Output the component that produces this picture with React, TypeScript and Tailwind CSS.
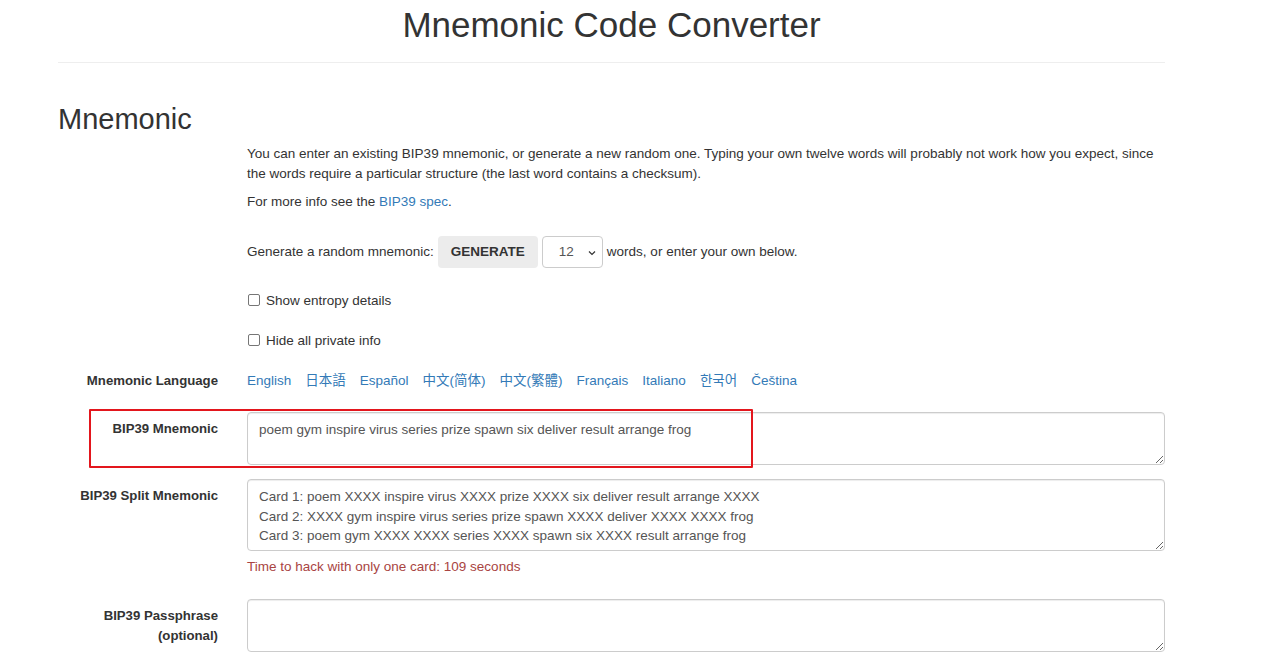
import React from "react";

const font = "font-['Liberation_Sans','Noto_Sans_CJK_SC',Arial,sans-serif]";

function Checkbox({ label }: { label: string }) {
  return (
    <div className="flex items-center h-[19.5px]">
      <span className="ml-[1px] w-[12px] h-[12px] border border-[#767676] rounded-[2px] bg-white mr-[6px] box-border" />
      <span>{label}</span>
    </div>
  );
}

export default function App() {
  const langs = ["English", "日本語", "Español", "中文(简体)", "中文(繁體)", "Français", "Italiano", "한국어", "Čeština"];
  const taCls =
    "block w-[918px] border border-[#ccc] rounded-[4px] px-[11px] py-[7px] text-[13.5px] leading-[19.5px] text-[#555] shadow-[inset_0_1px_1px_rgba(0,0,0,0.075)] outline-none " +
    font;
  return (
    <div className={"relative w-[1280px] h-[656px] overflow-hidden bg-white text-[#333] text-[13.5px] leading-[19.5px] " + font}>
      <div className="ml-[58px] w-[1107px]">
        <h1 className="pt-[6px] text-center text-[35px] leading-[38px] font-normal">Mnemonic Code Converter</h1>
        <div className="mt-[18px] border-t border-[#eee]" />
        <h2 className="mt-[40px] text-[29px] leading-[32px] font-normal">Mnemonic</h2>

        <div className="ml-[189px]">
          <p className="mt-[9px]">
            You can enter an existing BIP39 mnemonic, or generate a new random one. Typing your own twelve words will probably not work how you expect, since
            <br />
            the words require a particular structure (the last word contains a checksum).
          </p>
          <p className="mt-[9px]">
            For more info see the <span className="text-[#337ab7]">BIP39 spec</span>.
          </p>
          <div className="mt-[24px] flex items-center h-[32px]">
            <span>Generate a random mnemonic:</span>
            <span className="ml-[4px] h-[32px] w-[100px] flex items-center justify-center bg-[#ececec] rounded-[4px] font-bold text-[13.5px] text-[#333]">
              GENERATE
            </span>
            <span className="ml-[4px] h-[32px] w-[61px] border border-[#ccc] rounded-[4px] flex items-center pl-[16px] text-[#555] relative">
              12
              <svg className="absolute left-[45px] top-[13px]" width="8" height="6" viewBox="0 0 8 6">
                <path d="M1 1.5 L4 4.5 L7 1.5" fill="none" stroke="#333" strokeWidth="1.2" />
              </svg>
            </span>
            <span className="ml-[4px]">words, or enter your own below.</span>
          </div>
          <div className="mt-[23px]">
            <Checkbox label="Show entropy details" />
          </div>
          <div className="mt-[20.5px]">
            <Checkbox label="Hide all private info" />
          </div>
        </div>

        <div className="mt-[20.5px] grid grid-cols-[160px_918px] gap-x-[29px]">
          <div className="text-right font-bold text-[13.2px]">Mnemonic Language</div>
          <div className="flex gap-[14px] text-[#337ab7]">
            {langs.map((l) => (
              <span key={l}>{l}</span>
            ))}
          </div>
        </div>

        <div className="mt-[22px] grid grid-cols-[160px_918px] gap-x-[29px]">
          <div className="text-right font-bold text-[13.2px] pt-[7px]">BIP39 Mnemonic</div>
          <textarea
            readOnly
            className={taCls + " h-[53px]"}
            value="poem gym inspire virus series prize spawn six deliver result arrange frog"
          />
        </div>

        <div className="mt-[14px] grid grid-cols-[160px_918px] gap-x-[29px]">
          <div className="text-right font-bold text-[13.2px] pt-[7px]">BIP39 Split Mnemonic</div>
          <div>
            <textarea
              readOnly
              className={taCls + " h-[72px] overflow-hidden"}
              value={
                "Card 1: poem XXXX inspire virus XXXX prize XXXX six deliver result arrange XXXX\nCard 2: XXXX gym inspire virus series prize spawn XXXX deliver XXXX XXXX frog\nCard 3: poem gym XXXX XXXX series XXXX spawn six XXXX result arrange frog"
              }
            />
            <div className="mt-[6px] text-[#a94442]">Time to hack with only one card: 109 seconds</div>
          </div>
        </div>

        <div className="mt-[22.5px] grid grid-cols-[160px_918px] gap-x-[29px]">
          <div className="text-right font-bold text-[13.2px] pt-[7px]">
            BIP39 Passphrase
            <br />
            (optional)
          </div>
          <textarea readOnly className={taCls + " h-[53px]"} value="" />
        </div>
      </div>

      <div className="absolute left-[89px] top-[409px] w-[664px] h-[59px] border-2 border-[#e3161d] rounded-[1px] pointer-events-none" />
    </div>
  );
}
